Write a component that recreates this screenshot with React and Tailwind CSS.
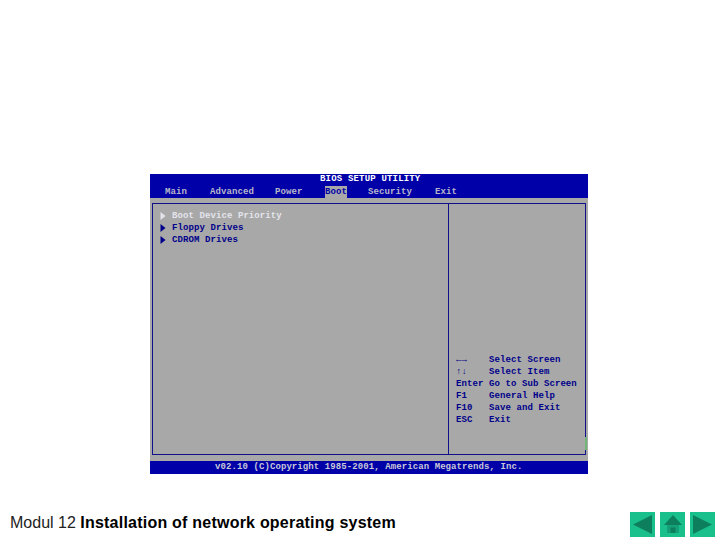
const menu = [
  { label: "Main", w: "w-[60px]", pl: "pl-[15px]" },
  { label: "Advanced", w: "w-[65px]", pl: "pl-0" },
  { label: "Power", w: "w-[50px]", pl: "pl-0" },
];

const help = [
  ["←→", "Select Screen"],
  ["↑↓", "Select Item"],
  ["Enter", "Go to Sub Screen"],
  ["F1", "General Help"],
  ["F10", "Save and Exit"],
  ["ESC", "Exit"],
];

const boot = ["Boot Device Priority", "Floppy Drives", "CDROM Drives"];

const App = () => {
  return (
    <div className="w-[720px] h-[540px] bg-white flex flex-col overflow-hidden font-['Liberation_Sans',sans-serif]">
      {/* BIOS screenshot */}
      <div className="mt-[174px] ml-[150px] w-[438px] h-[300px] flex flex-col bg-[#a8a8a8] font-['Liberation_Mono',monospace] text-[9px] font-bold tracking-[0.01em]">
        {/* Header */}
        <div className="h-[24px] bg-[#0000a8] text-[#b8b8c8] flex flex-col">
          <div className="h-[12px] pl-[170px] leading-[11px] text-white tracking-[0.02em]">BIOS SETUP UTILITY</div>
          <div className="flex h-[12px] leading-[12px]">
            {menu.map((m) => (
              <div key={m.label} className={`${m.w} ${m.pl}`}>{m.label}</div>
            ))}
            <div className="w-[22px] bg-[#a8a8a8] text-[#0000a8] text-center">Boot</div>
            <div className="w-[88px] pl-[21px]">Security</div>
            <div>Exit</div>
          </div>
        </div>

        {/* Main panel */}
        <div className="relative flex-1 flex mx-[2px] mt-[5px] mb-[6px] border border-[#10108a]">
          <div className="w-[296px] border-r border-[#10108a] pt-[6px] pl-[7px] text-[#00008a]">
            {boot.map((b, i) => (
              <div key={b} className={`flex h-[12px] leading-[12px] items-center ${i === 0 ? "text-[#e4e4ec]" : ""}`}>
                <svg viewBox="0 0 6 8" className="w-[6px] h-[8px] mr-[6px] fill-current">
                  <path d="M0.5 0 L5.5 4 L0.5 8 Z" />
                </svg>
                <span>{b}</span>
              </div>
            ))}
          </div>
          <div className="flex-1 flex flex-col justify-end pb-[28px] pl-[7px] text-[#00008a]">
            {help.map(([k, v]) => (
              <div key={k} className="flex h-[12px] leading-[12px]">
                <span className="w-[33px]">{k}</span>
                <span>{v}</span>
              </div>
            ))}
          </div>
          {/* green mark on the right border */}
          <div className="absolute right-[-2px] bottom-[4px] w-[2px] h-[13px] bg-[#6fb878]" />
        </div>

        {/* Footer */}
        <div className="h-[13px] bg-[#0000a8] text-[#c8c8d8] leading-[13px] pl-[65px]">
          v02.10 (C)Copyright 1985-2001, American Megatrends, Inc.
        </div>
      </div>

      {/* Slide footer */}
      <div className="flex items-center justify-between h-[25px] mt-[38px] ml-[10px] mr-[5px]">
        <div className="text-black whitespace-nowrap -translate-y-[2px]">
          <span className="text-[16px] text-[#222222]">Modul 12 </span>
          <span className="text-[16px] font-bold tracking-[0.014em]">Installation of network operating system</span>
        </div>
        <div className="flex gap-[5px]">
          <div className="w-[25px] h-[25px] bg-[#19c08c] flex items-center justify-center">
            <svg viewBox="0 0 25 25" className="w-[25px] h-[25px] fill-[#0e7f5c]"><path d="M3 12.5 L22 3 V22 Z" /></svg>
          </div>
          <div className="w-[25px] h-[25px] bg-[#19c08c] flex items-center justify-center">
            <svg viewBox="0 0 25 25" className="w-[25px] h-[25px]">
              <path className="fill-[#0e7f5c]" d="M13 3 L22 13 H4 Z" />
              <path className="fill-[#14a078]" d="M7 13 H19 V21 H7 Z" />
              <path className="fill-[#0e7f5c]" d="M10.5 15.5 H15.5 V21 H10.5 Z" />
            </svg>
          </div>
          <div className="w-[25px] h-[25px] bg-[#19c08c] flex items-center justify-center">
            <svg viewBox="0 0 25 25" className="w-[25px] h-[25px] fill-[#0e7f5c]"><path d="M3 3 L22 12.5 L3 22 Z" /></svg>
          </div>
        </div>
      </div>
    </div>
  );
};

export default App;
